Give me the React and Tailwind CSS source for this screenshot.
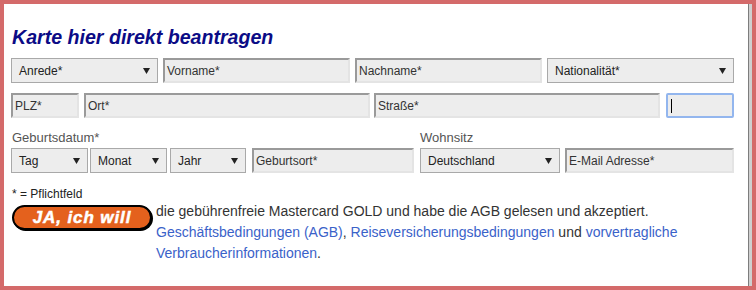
const font = { fontFamily: '"Liberation Sans", Arial, sans-serif' };

function Arrow() {
  return (
    <svg width="7" height="7" viewBox="0 0 7 7" className="shrink-0">
      <polygon points="0,1 7,1 3.5,7" fill="#222" />
    </svg>
  );
}

function Select({ label, className }) {
  return (
    <div
      className={`h-[25px] flex items-center justify-between pl-[7px] pr-[7px] border border-[#a9a9a9] bg-[#ededed] text-[12px] text-[#222] ${className}`}
    >
      <span>{label}</span>
      <Arrow />
    </div>
  );
}

function Field({ label, className }) {
  return (
    <div
      className={`h-[25px] flex items-center pl-[2px] border-2 border-t-[#9a9a9a] border-l-[#9a9a9a] border-b-[#e4e4e4] border-r-[#e4e4e4] bg-[#ededed] text-[12px] text-[#333] ${className}`}
    >
      {label}
    </div>
  );
}

export default function App() {
  return (
    <div className="w-[756px] h-[290px] bg-[#d46a6a] p-[4px] flex" style={font}>
      <div className="flex-1 bg-white pt-[22px] pl-[7px]">
        <h1 className="text-[19.6px] leading-[23px] font-bold italic text-[#0b0b86] pl-[1px]">
          Karte hier direkt beantragen
        </h1>

        <div className="flex mt-[9px]">
          <Select label="Anrede*" className="w-[147px]" />
          <Field label="Vorname*" className="w-[187px] ml-[5px]" />
          <Field label="Nachname*" className="w-[187px] ml-[5px]" />
          <Select label="Nationalität*" className="w-[187px] ml-[5px]" />
        </div>

        <div className="flex mt-[10px]">
          <Field label="PLZ*" className="w-[68px]" />
          <Field label="Ort*" className="w-[286px] ml-[5px]" />
          <Field label="Straße*" className="w-[286px] ml-[4px]" />
          <div className="w-[68px] ml-[6px] h-[25px] flex items-center pl-[3px] border-2 border-[#93b6ee] rounded-[2px] bg-[#ededed]">
            <span className="w-px h-[14px] bg-black" />
          </div>
        </div>

        <div className="flex mt-[12px] text-[13px] leading-[15px] text-[#555]">
          <span className="w-[409px] pl-[1px]">Geburtsdatum*</span>
          <span>Wohnsitz</span>
        </div>

        <div className="flex mt-[3px]">
          <Select label="Tag" className="w-[77px]" />
          <Select label="Monat" className="w-[77px] ml-[2px]" />
          <Select label="Jahr" className="w-[76px] ml-[3px]" />
          <Field label="Geburtsort*" className="w-[162px] ml-[6px]" />
          <Select label="Deutschland" className="w-[140px] ml-[6px]" />
          <Field label="E-Mail Adresse*" className="w-[169px] ml-[5px]" />
        </div>

        <p className="mt-[14px] text-[12px] leading-[14px] text-[#222] pl-[1px]">* = Pflichtfeld</p>

        <div className="flex">
          <div className="mt-[4px] ml-[1px] w-[140px] h-[25px] shrink-0 rounded-full border-2 border-black bg-[#e4611d] shadow-[1px_1px_0_#000] flex items-center justify-center">
            <span className="text-[17px] font-bold italic text-white tracking-[0.9px] leading-none [-webkit-text-stroke:0.5px_white]">
              JA, ich will
            </span>
          </div>
          <p className="ml-[4px] text-[14px] leading-[21px] text-[#333]">
            die gebührenfreie Mastercard GOLD und habe die AGB gelesen und akzeptiert.
            <br />
            <a className="text-[#3a62c9]">Geschäftsbedingungen (AGB)</a>,{' '}
            <a className="text-[#3a62c9]">Reiseversicherungsbedingungen</a> und{' '}
            <a className="text-[#3a62c9]">vorvertragliche</a>
            <br />
            <a className="text-[#3a62c9]">Verbraucherinformationen</a>.
          </p>
        </div>
      </div>
      <div className="w-[4px] border-l border-[#7d7d7d] bg-[#cfcfcf]" />
    </div>
  );
}
